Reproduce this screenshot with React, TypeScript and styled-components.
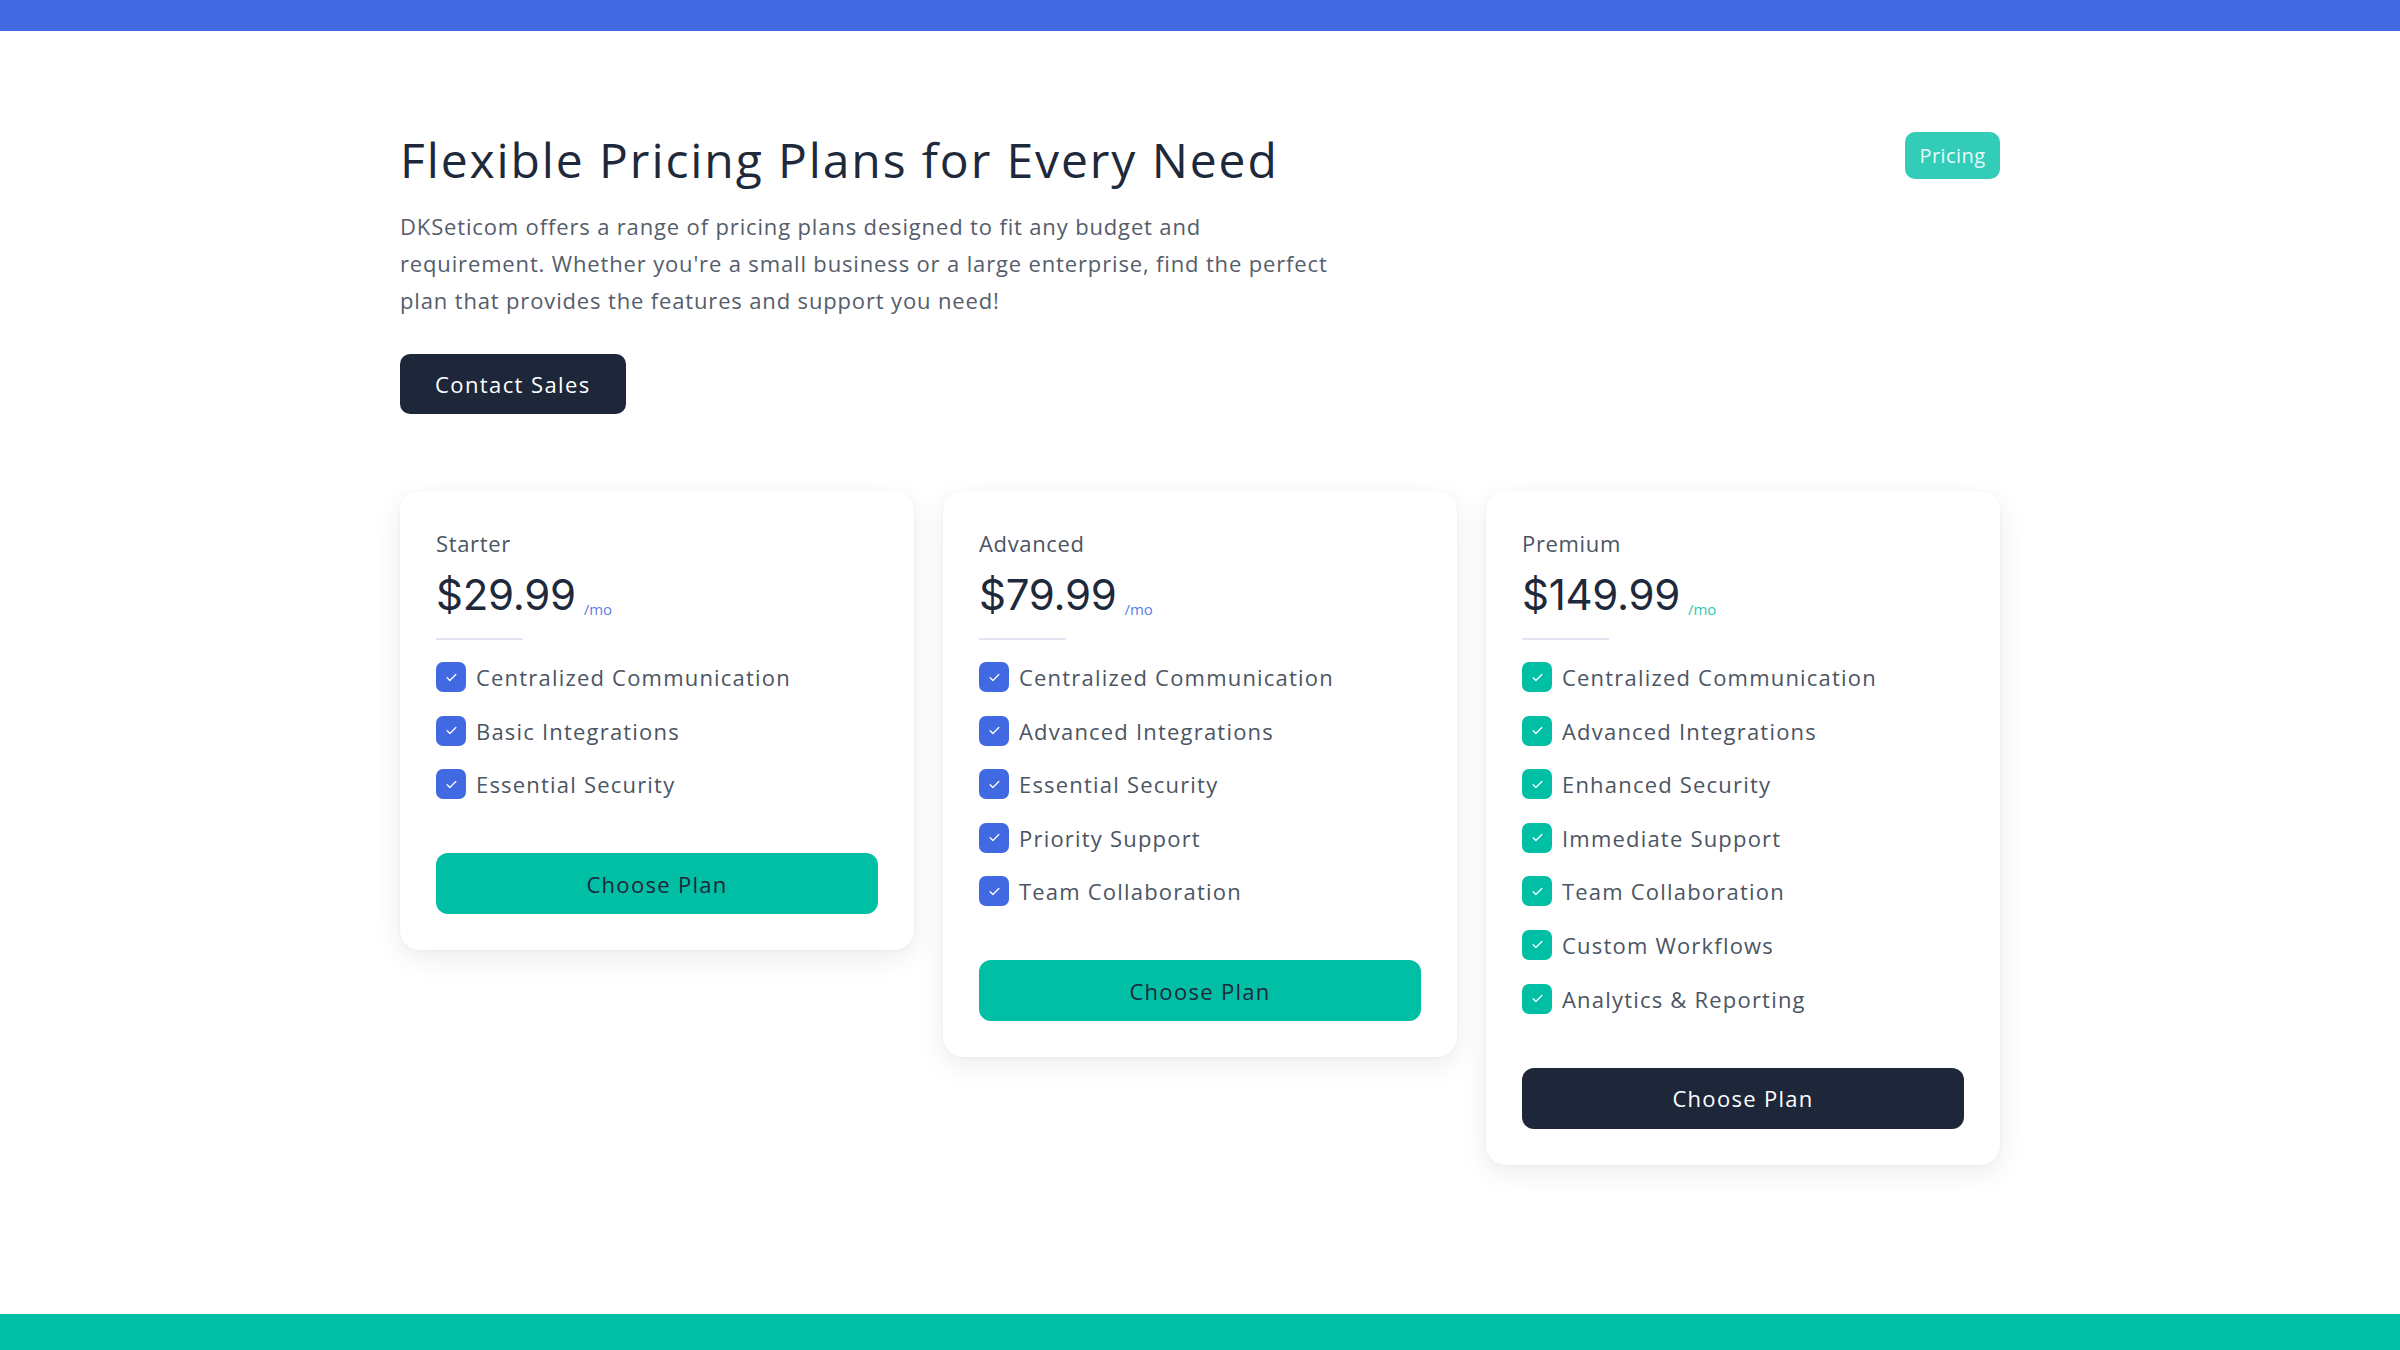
import React from "react";
import styled, { createGlobalStyle } from "styled-components";

const GlobalStyle = createGlobalStyle`
  html, body { margin: 0; padding: 0; background: #ffffff; }
  body { font-family: "Open Sans", "Noto Sans", sans-serif; color: #1e293b; }
  * { box-sizing: border-box; }
`;

const BLUE = "#4169e1";
const TEAL = "#00bfa5";
const NAVY = "#1e2739";

const Page = styled.div`
  min-height: 1350px;
  display: flex;
  flex-direction: column;
  border-top: 31px solid ${BLUE};
`;

const Main = styled.main`
  flex: 1;
  width: 1600px;
  margin: 0 auto;
  padding-top: 99px;
`;

const Footer = styled.footer`
  height: 36px;
  background: ${TEAL};
`;

const Header = styled.header`
  display: flex;
  justify-content: space-between;
  align-items: flex-start;
`;

const Intro = styled.div`
  display: flex;
  flex-direction: column;
  align-items: flex-start;
`;

const Title = styled.h1`
  margin: 0;
  font-size: 48px;
  font-weight: 400;
  line-height: 60px;
  color: #1e293b;
  letter-spacing: 1.9px;
`;

const Lead = styled.p`
  margin: 18px 0 0;
  max-width: 930px;
  font-size: 22px;
  line-height: 37px;
  font-weight: 400;
  letter-spacing: 0.85px;
  color: #555d6b;
`;

const DarkButton = styled.button`
  margin-top: 35px;
  height: 60px;
  padding: 0 35px;
  border: none;
  border-radius: 10px;
  background: ${NAVY};
  color: #ffffff;
  font-family: inherit;
  font-size: 22px;
  letter-spacing: 1.4px;
  cursor: pointer;
`;

const Badge = styled.span`
  margin-top: 2px;
  display: inline-flex;
  align-items: center;
  justify-content: center;
  width: 95px;
  height: 47px;
  border-radius: 10px;
  background: #33ccb8;
  color: #e6fbf8;
  font-size: 20px;
  letter-spacing: 0.4px;
`;

const Grid = styled.section`
  margin-top: 77px;
  display: grid;
  grid-template-columns: repeat(3, 1fr);
  gap: 29px;
  align-items: start;
`;

const Card = styled.article`
  background: #ffffff;
  border-radius: 20px;
  padding: 36px;
  box-shadow: 0 8px 28px rgba(15, 23, 42, 0.08), 0 1px 4px rgba(15, 23, 42, 0.04);
`;

const PlanName = styled.h3`
  margin: 0;
  font-size: 22px;
  line-height: 33px;
  font-weight: 400;
  letter-spacing: 0.65px;
  color: #4b5563;
`;

const PriceRow = styled.div`
  margin-top: 10px;
  display: flex;
  align-items: baseline;
  gap: 8px;
`;

const Price = styled.span`
  font-family: Inter, "Liberation Sans", sans-serif;
  font-size: 42px;
  line-height: 50px;
  font-weight: 400;
  color: #1e293b;
  letter-spacing: -0.3px;
`;

const Per = styled.span<{ $accent: string }>`
  font-size: 15px;
  color: ${(p) => p.$accent};
  opacity: 0.85;
  transform: translateY(5px);
`;

const Divider = styled.hr`
  margin: 18px 0 22px;
  width: 87px;
  border: none;
  height: 2px;
  background: #e3e6f0;
`;

const Features = styled.ul`
  margin: 0;
  padding: 0;
  list-style: none;
  display: flex;
  flex-direction: column;
  gap: 23.6px;
`;

const Feature = styled.li`
  display: flex;
  align-items: center;
  gap: 10px;
  height: 30px;
  font-size: 22px;
  letter-spacing: 1.2px;
  color: #4b5563;
`;

const Check = styled.span<{ $accent: string }>`
  flex: none;
  width: 30px;
  height: 30px;
  border-radius: 7px;
  background: ${(p) => p.$accent};
  display: inline-flex;
  align-items: center;
  justify-content: center;
`;

const PlanButton = styled.button<{ $dark: boolean }>`
  margin-top: 54px;
  width: 100%;
  height: 61px;
  border: none;
  border-radius: 12px;
  background: ${(p) => (p.$dark ? NAVY : TEAL)};
  color: ${(p) => (p.$dark ? "#ffffff" : NAVY)};
  font-family: inherit;
  font-size: 22px;
  letter-spacing: 1.3px;
  cursor: pointer;
`;

type Plan = {
  name: string;
  price: string;
  accent: string;
  dark: boolean;
  features: string[];
};

const plans: Plan[] = [
  {
    name: "Starter",
    price: "$29.99",
    accent: BLUE,
    dark: false,
    features: ["Centralized Communication", "Basic Integrations", "Essential Security"],
  },
  {
    name: "Advanced",
    price: "$79.99",
    accent: BLUE,
    dark: false,
    features: [
      "Centralized Communication",
      "Advanced Integrations",
      "Essential Security",
      "Priority Support",
      "Team Collaboration",
    ],
  },
  {
    name: "Premium",
    price: "$149.99",
    accent: TEAL,
    dark: true,
    features: [
      "Centralized Communication",
      "Advanced Integrations",
      "Enhanced Security",
      "Immediate Support",
      "Team Collaboration",
      "Custom Workflows",
      "Analytics & Reporting",
    ],
  },
];

const CheckMark = () => (
  <svg width="13" height="13" viewBox="0 0 24 24" fill="none" stroke="#ffffff" strokeWidth="2.4" strokeLinecap="round" strokeLinejoin="round">
    <path d="M4 12.5l5 5L20 6.5" />
  </svg>
);

export default function App() {
  return (
    <>
      <GlobalStyle />
      <Page>
        <Main>
          <Header>
            <Intro>
              <Title>Flexible Pricing Plans for Every Need</Title>
              <Lead>
                DKSeticom offers a range of pricing plans designed to fit any budget and requirement. Whether you're a small business or a large enterprise, find the perfect plan that provides the features and support you need!
              </Lead>
              <DarkButton>Contact Sales</DarkButton>
            </Intro>
            <Badge>Pricing</Badge>
          </Header>
          <Grid>
            {plans.map((plan) => (
              <Card key={plan.name}>
                <PlanName>{plan.name}</PlanName>
                <PriceRow>
                  <Price>{plan.price}</Price>
                  <Per $accent={plan.accent}>/mo</Per>
                </PriceRow>
                <Divider />
                <Features>
                  {plan.features.map((f) => (
                    <Feature key={f}>
                      <Check $accent={plan.accent}>
                        <CheckMark />
                      </Check>
                      {f}
                    </Feature>
                  ))}
                </Features>
                <PlanButton $dark={plan.dark}>Choose Plan</PlanButton>
              </Card>
            ))}
          </Grid>
        </Main>
        <Footer />
      </Page>
    </>
  );
}
